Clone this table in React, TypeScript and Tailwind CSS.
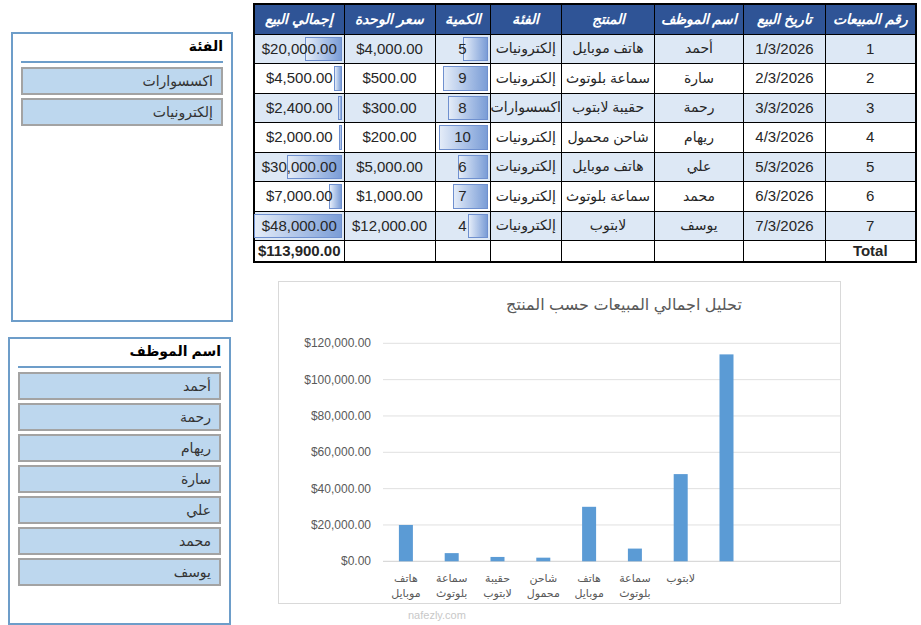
import React from "react";

type Sale = {
  id: number;
  date: string;
  employee: string;
  product: string;
  category: string;
  qty: number;
  price: string;
  total: number;
};

const sales: Sale[] = [
  { id: 1, date: "1/3/2026", employee: "أحمد", product: "هاتف موبايل", category: "إلكترونيات", qty: 5, price: "$4,000.00", total: 20000 },
  { id: 2, date: "2/3/2026", employee: "سارة", product: "سماعة بلوتوث", category: "إلكترونيات", qty: 9, price: "$500.00", total: 4500 },
  { id: 3, date: "3/3/2026", employee: "رحمة", product: "حقيبة لابتوب", category: "اكسسوارات", qty: 8, price: "$300.00", total: 2400 },
  { id: 4, date: "4/3/2026", employee: "ريهام", product: "شاحن محمول", category: "إلكترونيات", qty: 10, price: "$200.00", total: 2000 },
  { id: 5, date: "5/3/2026", employee: "علي", product: "هاتف موبايل", category: "إلكترونيات", qty: 6, price: "$5,000.00", total: 30000 },
  { id: 6, date: "6/3/2026", employee: "محمد", product: "سماعة بلوتوث", category: "إلكترونيات", qty: 7, price: "$1,000.00", total: 7000 },
  { id: 7, date: "7/3/2026", employee: "يوسف", product: "لابتوب", category: "إلكترونيات", qty: 4, price: "$12,000.00", total: 48000 },
];

const money = (v: number) =>
  "$" + v.toLocaleString("en-US", { minimumFractionDigits: 2, maximumFractionDigits: 2 });

const headers = ["رقم المبيعات", "تاريخ البيع", "اسم الموظف", "المنتج", "الفئة", "الكمية", "سعر الوحدة", "إجمالي البيع"];
const colWidths = [90, 82, 89, 93, 71, 55, 91, 90];

const font = { fontFamily: '"Liberation Sans", "DejaVu Sans", sans-serif' };

// excel style gradient data bar, grows from the right edge of the cell
const DataBar = ({ width }: { width: number }) => (
  <div
    className="absolute top-[2px] bottom-[2px] right-[2px] border border-[#6f90cf] bg-gradient-to-l from-[#7b9dd6] to-[#e4ecf8]"
    style={{ width }}
  />
);

const SalesTable = () => (
  <table dir="rtl" className="table-fixed border-collapse border-2 border-black text-[15px] text-[#262626]" style={font}>
    <colgroup>
      {colWidths.map((w, i) => (
        <col key={i} style={{ width: w }} />
      ))}
    </colgroup>
    <thead>
      <tr className="h-[30px] bg-[#2f5496]">
        {headers.map((h) => (
          <th key={h} className="border border-black text-white text-[14px] font-bold italic text-center">
            {h}
          </th>
        ))}
      </tr>
    </thead>
    <tbody>
      {sales.map((s, i) => (
        <tr key={s.id} className={`h-[29.5px] ${i % 2 === 0 ? "bg-[#dde8f5]" : "bg-white"}`}>
          <td className="border border-black text-center">{s.id}</td>
          <td className="border border-black text-center"><span dir="ltr">{s.date}</span></td>
          <td className="border border-black text-center text-[14px]">{s.employee}</td>
          <td className="border border-black text-center text-[14px]">{s.product}</td>
          <td className="border border-black text-center text-[14px]">{s.category}</td>
          <td className="border border-black text-center relative">
            <DataBar width={20 + ((s.qty - 4) * 29) / 6} />
            <span className="relative">{s.qty}</span>
          </td>
          <td className="border border-black text-center"><span dir="ltr">{s.price}</span></td>
          <td className="border border-black text-center relative">
            <DataBar width={3 + ((s.total - 2000) * 85) / 46000} />
            <span dir="ltr" className="relative">{money(s.total)}</span>
          </td>
        </tr>
      ))}
      <tr className="h-[21px] bg-white leading-[18px]">
        <td className="border border-black text-center font-bold">Total</td>
        <td className="border border-black" />
        <td className="border border-black" />
        <td className="border border-black" />
        <td className="border border-black" />
        <td className="border border-black" />
        <td className="border border-black" />
        <td className="border border-black text-center font-bold"><span dir="ltr">$113,900.00</span></td>
      </tr>
    </tbody>
  </table>
);

const Slicer = ({ title, items, className }: { title: string; items: string[]; className: string }) => (
  <div dir="rtl" className={`border-2 border-[#6d9dc9] bg-white ${className}`} style={font}>
    <div className="px-[8px]">
      <div className="h-[24px] flex items-center text-[14px] font-bold text-black">{title}</div>
      <div className="h-[2px] mt-[3px] bg-[#6d9dc9]" />
    </div>
    <div className="flex flex-col gap-[3px] px-[8px] mt-[4px]">
      {items.map((it) => (
        <div
          key={it}
          className="h-[28px] border-2 border-[#a3a3a3] bg-[#bdd7ee] flex items-center px-[8px] text-[14px] text-[#333]"
        >
          {it}
        </div>
      ))}
    </div>
  </div>
);

const chartData = [
  { label: ["هاتف", "موبايل"], value: 20000 },
  { label: ["سماعة", "بلوتوث"], value: 4500 },
  { label: ["حقيبة", "لابتوب"], value: 2400 },
  { label: ["شاحن", "محمول"], value: 2000 },
  { label: ["هاتف", "موبايل"], value: 30000 },
  { label: ["سماعة", "بلوتوث"], value: 7000 },
  { label: ["لابتوب"], value: 48000 },
  { label: [], value: 113900 },
];

const ticks = [120000, 100000, 80000, 60000, 40000, 20000, 0];

const SalesChart = () => {
  const plotLeft = 104;
  const plotRight = 562;
  const zeroY = 279.3;
  const topY = 61.3;
  const scale = (zeroY - topY) / 120000;
  const step = (plotRight - plotLeft) / 10;

  return (
    <div className="w-[563px] h-[323px] border border-[#d9d9d9] bg-white">
      <svg width="561" height="321" style={font}>
        <text x="345" y="28" textAnchor="middle" fontSize="16" fill="#595959">
          تحليل اجمالي المبيعات حسب المنتج
        </text>
        {ticks.map((t) => {
          const y = zeroY - t * scale;
          return (
            <g key={t}>
              <line x1={plotLeft} x2={plotRight} y1={y} y2={y} stroke={t === 0 ? "#d0d0d0" : "#e0e0e0"} strokeWidth="1" />
              <text x="92" y={y + 4} textAnchor="end" fontSize="12" fill="#595959">
                {money(t)}
              </text>
            </g>
          );
        })}
        {chartData.map((d, i) => {
          const cx = plotLeft + step * (i + 0.5);
          const h = d.value * scale;
          return (
            <g key={i}>
              <rect x={cx - 7} y={zeroY - h} width="14" height={h} fill="#5b9bd5" />
              {d.label.map((l, j) => (
                <text key={j} x={cx} y={300 + j * 15} textAnchor="middle" fontSize="11" fill="#595959">
                  {l}
                </text>
              ))}
            </g>
          );
        })}
      </svg>
    </div>
  );
};

export default function App() {
  return (
    <div className="relative w-[921px] h-[625px] overflow-hidden bg-white flex">
      {/* Slicers */}
      <div className="w-[253px] shrink-0 flex flex-col">
        <Slicer title="الفئة" items={["اكسسوارات", "إلكترونيات"]} className="ml-[11px] mt-[32px] w-[222px] h-[290px]" />
        <Slicer
          title="اسم الموظف"
          items={["أحمد", "رحمة", "ريهام", "سارة", "علي", "محمد", "يوسف"]}
          className="ml-[8px] mt-[15px] w-[223px] h-[288px]"
        />
      </div>

      {/* Table and chart */}
      <div className="flex flex-col pt-[3px]">
        <SalesTable />
        <div className="ml-[25px] mt-[18px]">
          <SalesChart />
        </div>
        <div className="ml-[155px] mt-[3px] text-[11px] text-[#c8c8c8]" style={font}>
          nafezly.com
        </div>
      </div>
    </div>
  );
}
